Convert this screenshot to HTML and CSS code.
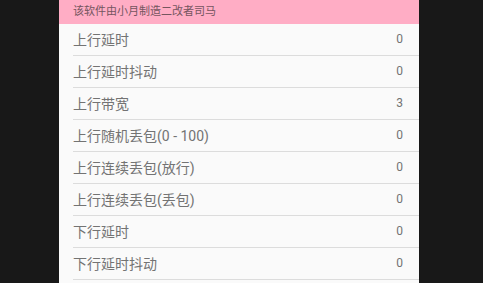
FILE: index.html
```html
<!DOCTYPE html>
<html lang="zh">
<head>
    <meta charset="UTF-8">
    <meta name="viewport" content="width=device-width, initial-scale=1.0">
    <title>网络模拟</title>
    <link rel="stylesheet" href="styles.css">
</head>
<body>
    <div class="panel">
        <!-- 顶部提示 -->
        <div class="banner">该软件由小月制造二改者司马</div>

        <!-- 参数列表 -->
        <ul class="setting-list">
            <li class="setting-row"><span class="setting-name">上行延时</span><span class="setting-value">0</span></li>
            <li class="setting-row"><span class="setting-name">上行延时抖动</span><span class="setting-value">0</span></li>
            <li class="setting-row"><span class="setting-name">上行带宽</span><span class="setting-value">3</span></li>
            <li class="setting-row"><span class="setting-name">上行随机丢包(0 - 100)</span><span class="setting-value">0</span></li>
            <li class="setting-row"><span class="setting-name">上行连续丢包(放行)</span><span class="setting-value">0</span></li>
            <li class="setting-row"><span class="setting-name">上行连续丢包(丢包)</span><span class="setting-value">0</span></li>
            <li class="setting-row"><span class="setting-name">下行延时</span><span class="setting-value">0</span></li>
            <li class="setting-row"><span class="setting-name">下行延时抖动</span><span class="setting-value">0</span></li>
        </ul>
    </div>
</body>
</html>
```

FILE: styles.css
```css
* {
    box-sizing: border-box;
    margin: 0;
    padding: 0;
    font-family: Roboto, "Noto Sans CJK SC", sans-serif;
}

body {
    background-color: #181818;
    height: 100vh;
    overflow: hidden;
    padding-left: 59px;
}

.panel {
    width: 360px;
    height: 100%;
    background-color: #fafafa;
}

.banner {
    height: 24px;
    line-height: 24px;
    padding-left: 14px;
    background-color: #ffadc5;
    color: #75555f;
    font-size: 11px;
}

.setting-list {
    list-style: none;
    margin-left: 14px;
}

.setting-row {
    display: flex;
    align-items: center;
    justify-content: space-between;
    height: 32px;
    padding-right: 16px;
    padding-bottom: 1px;
    border-bottom: 1px solid #dcdcdc;
    color: #737373;
}

.setting-name {
    font-size: 14px;
}

.setting-value {
    font-size: 12px;
}
```
